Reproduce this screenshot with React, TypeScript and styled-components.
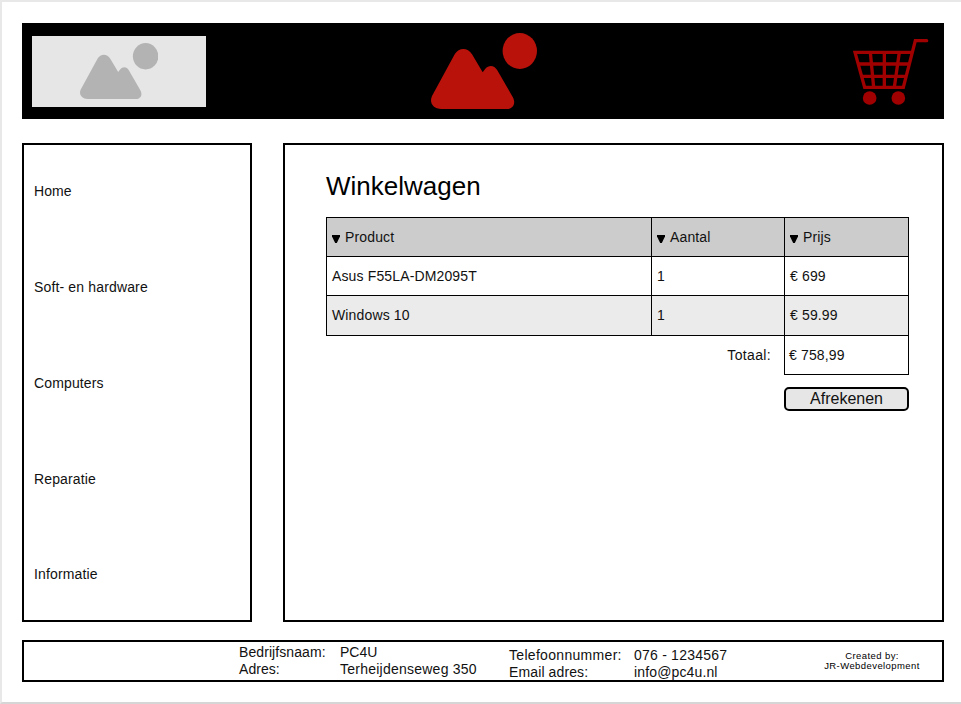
import React from "react";
import styled, { createGlobalStyle } from "styled-components";

const GlobalStyle = createGlobalStyle`
  * { box-sizing: border-box; }
  body { margin: 0; background: #fff; }
`;

const Page = styled.div`
  width: 961px;
  height: 704px;
  padding: 21px 17px 0 20px;
  border-top: 2px solid #e8e8e8;
  border-left: 2px solid #e8e8e8;
  border-bottom: 2px solid #d6d6d6;
  background: #fff;
  color: #111;
  font: 14px/16px "Liberation Sans", Arial, sans-serif;
  overflow: hidden;
`;

const Header = styled.header`
  display: flex;
  justify-content: space-between;
  align-items: flex-start;
  height: 96px;
  padding: 10px 15px 0 10px;
  background: #000;
`;

const Logo = styled.div`
  width: 174px;
  height: 71px;
  margin-top: 3px;
  padding: 6.5px 0 0 48px;
  background: #e6e6e6;
  svg { display: block; }
`;

const Banner = styled.div`
  margin-left: -91px;
  svg { display: block; }
`;

const CartLink = styled.div`
  padding-top: 5px;
  svg { display: block; }
`;

const Body = styled.div`
  display: flex;
  gap: 31px;
  height: 479px;
  margin-top: 24px;
`;

const Sidebar = styled.nav`
  display: flex;
  flex-direction: column;
  gap: 79.85px;
  width: 230px;
  padding: 38px 10px 0;
  border: 2px solid #000;
`;

const Text = styled.span<{ $spacing?: number }>`
  letter-spacing: ${(p) => p.$spacing ?? 0.14}px;
  white-space: nowrap;
`;

const Main = styled.main`
  width: 661px;
  padding: 26px 33px 0 41px;
  border: 2px solid #000;
`;

const Title = styled.h1`
  margin: 0 0 16px;
  color: #000;
  font-size: 26px;
  font-weight: 400;
  line-height: 30px;
`;

const Table = styled.div`
  width: 583px;
  border-top: 1px solid #000;
`;

const Row = styled.div<{ $bg?: string; $tall?: boolean }>`
  display: grid;
  grid-template-columns: 326px 133px 124px;
  height: ${(p) => (p.$tall ? 40 : 39)}px;
  background: ${(p) => p.$bg ?? "#fff"};
`;

const Cell = styled.div`
  display: flex;
  gap: 5px;
  padding: 11px 0 0 5px;
  border-right: 1px solid #000;
  border-bottom: 1px solid #000;
  &:first-child { border-left: 1px solid #000; }
`;

const TotalRow = styled.div`
  display: grid;
  grid-template-columns: 458px 125px;
  height: 39px;
`;

const TotalLabel = styled.div`
  padding: 11px 13px 0 0;
  text-align: right;
`;

const TotalValue = styled.div`
  padding: 11px 0 0 4px;
  border: 1px solid #000;
  border-top: 0;
`;

const PayButton = styled.button`
  display: block;
  width: 125px;
  height: 24px;
  margin: 12px 0 0 458px;
  padding: 0;
  border: 2px solid #000;
  border-radius: 5px;
  background: #e6e6e6;
  color: #111;
  font: 16px/18px "Liberation Sans", Arial, sans-serif;
`;

const Footer = styled.footer`
  display: flex;
  height: 42px;
  margin-top: 18px;
  padding-left: 215px;
  border: 2px solid #000;
`;

const Details = styled.div<{ $label: number; $width: number; $top: number }>`
  display: grid;
  grid-template-columns: ${(p) => p.$label}px auto;
  grid-auto-rows: 17px;
  align-content: start;
  width: ${(p) => p.$width}px;
  padding-top: ${(p) => p.$top}px;
`;

const Credit = styled.div`
  width: 96px;
  margin-left: 45px;
  padding-top: 9px;
  color: #000;
  font-size: 9.5px;
  line-height: 10px;
  text-align: center;
`;

const Mountains = ({ color, width, height }: { color: string; width: number; height: number }) => (
  <svg width={width} height={height} viewBox="0 0 106 76" preserveAspectRatio="none" fill={color}>
    <path d="M10.5 76C2 76-2 69.500 1 63L23.700 21.300C28 14.300 36.700 14.300 41 21.300L51.700 39.300L54.300 35.800C58 31.700 63.300 32.200 66.300 37.300L81.700 64C85.300 70.500 82 76 75.700 76Z" />
    <ellipse cx="88.800" cy="18" rx="17.200" ry="17.900" />
  </svg>
);

const CartIcon = () => (
  <svg width="76" height="68" viewBox="69 69 228 204" fill="none" stroke="#a00000" strokeWidth="10">
    <path d="M290 77H256L220 217H104L75 112H246" strokeLinecap="round" />
    <path d="M84 147H237M94 184H228M121 112L131 217M163 112V217M208 112L193 217" />
    <g fill="#a00000" stroke="none">
      <circle cx="119" cy="249" r="20.500" />
      <circle cx="205" cy="249" r="20.500" />
    </g>
  </svg>
);

const SortArrow = () => (
  <svg width="8" height="24" viewBox="0 0 8 24">
    <path d="M-0.300 6H8.300V7L4.800 14H3.200L-0.300 7Z" fill="#000" />
  </svg>
);

const menu = [
  { label: "Home", spacing: 0.1 },
  { label: "Soft- en hardware", spacing: 0.15 },
  { label: "Computers", spacing: 0.14 },
  { label: "Reparatie", spacing: 0.14 },
  { label: "Informatie", spacing: 0.14 },
];
const columns = ["Product", "Aantal", "Prijs"];
const items = [
  ["Asus F55LA-DM2095T", "1", "€ 699"],
  ["Windows 10", "1", "€ 59.99"],
];

export default function App() {
  return (
    <Page>
      <GlobalStyle />
      <Header>
        <Logo><Mountains color="#b3b3b3" width={78.3} height={56} /></Logo>
        <Banner><Mountains color="#b8120b" width={106} height={76} /></Banner>
        <CartLink><CartIcon /></CartLink>
      </Header>
      <Body>
        <Sidebar>
          {menu.map((m) => <Text key={m.label} $spacing={m.spacing}>{m.label}</Text>)}
        </Sidebar>
        <Main>
          <Title>Winkelwagen</Title>
          <Table>
            <Row $bg="#ccc">
              {columns.map((c) => <Cell key={c}><SortArrow /><Text>{c}</Text></Cell>)}
            </Row>
            {items.map((item, i) => (
              <Row key={item[0]} $bg={i % 2 ? "#ebebeb" : "#fff"} $tall={i % 2 === 1}>
                {item.map((v, k) => <Cell key={k}><Text>{v}</Text></Cell>)}
              </Row>
            ))}
            <TotalRow>
              <TotalLabel><Text $spacing={0.35}>Totaal:</Text></TotalLabel>
              <TotalValue><Text>€ 758,99</Text></TotalValue>
            </TotalRow>
          </Table>
          <PayButton>Afrekenen</PayButton>
        </Main>
      </Body>
      <Footer>
        <Details $label={101} $width={270} $top={2}>
          <Text $spacing={0.08}>Bedrijfsnaam:</Text><Text $spacing={0}>PC4U</Text>
          <Text $spacing={0.05}>Adres:</Text><Text $spacing={0.24}>Terheijdenseweg 350</Text>
        </Details>
        <Details $label={125} $width={270} $top={5}>
          <Text $spacing={0.31}>Telefoonnummer:</Text><Text $spacing={0.22}>076 - 1234567</Text>
          <Text $spacing={0.12}>Email adres:</Text><Text>info@pc4u.nl</Text>
        </Details>
        <Credit>
          <Text $spacing={0.42}>Created by:<br />JR-Webdevelopment</Text>
        </Credit>
      </Footer>
    </Page>
  );
}
